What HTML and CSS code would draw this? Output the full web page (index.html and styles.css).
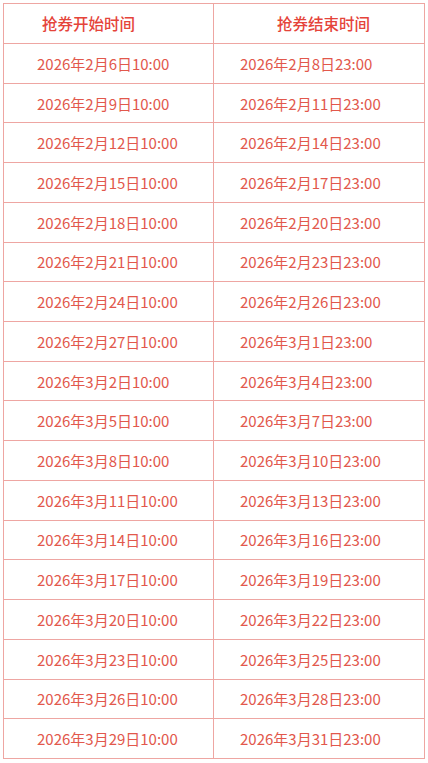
FILE: index.html
```html
<!DOCTYPE html>
<html lang="zh-CN">
<head>
<meta charset="utf-8">
<link rel="stylesheet" href="styles.css">
</head>
<body>
<div class="table">
  <div class="cell head c1">抢券开始时间</div><div class="cell head c2">抢券结束时间</div>
  <div class="cell c1">2026年2月6日10:00</div><div class="cell c2">2026年2月8日23:00</div>
  <div class="cell c1">2026年2月9日10:00</div><div class="cell c2">2026年2月11日23:00</div>
  <div class="cell c1">2026年2月12日10:00</div><div class="cell c2">2026年2月14日23:00</div>
  <div class="cell c1">2026年2月15日10:00</div><div class="cell c2">2026年2月17日23:00</div>
  <div class="cell c1">2026年2月18日10:00</div><div class="cell c2">2026年2月20日23:00</div>
  <div class="cell c1">2026年2月21日10:00</div><div class="cell c2">2026年2月23日23:00</div>
  <div class="cell c1">2026年2月24日10:00</div><div class="cell c2">2026年2月26日23:00</div>
  <div class="cell c1">2026年2月27日10:00</div><div class="cell c2">2026年3月1日23:00</div>
  <div class="cell c1">2026年3月2日10:00</div><div class="cell c2">2026年3月4日23:00</div>
  <div class="cell c1">2026年3月5日10:00</div><div class="cell c2">2026年3月7日23:00</div>
  <div class="cell c1">2026年3月8日10:00</div><div class="cell c2">2026年3月10日23:00</div>
  <div class="cell c1">2026年3月11日10:00</div><div class="cell c2">2026年3月13日23:00</div>
  <div class="cell c1">2026年3月14日10:00</div><div class="cell c2">2026年3月16日23:00</div>
  <div class="cell c1">2026年3月17日10:00</div><div class="cell c2">2026年3月19日23:00</div>
  <div class="cell c1">2026年3月20日10:00</div><div class="cell c2">2026年3月22日23:00</div>
  <div class="cell c1">2026年3月23日10:00</div><div class="cell c2">2026年3月25日23:00</div>
  <div class="cell c1">2026年3月26日10:00</div><div class="cell c2">2026年3月28日23:00</div>
  <div class="cell c1">2026年3月29日10:00</div><div class="cell c2">2026年3月31日23:00</div>
</div>
</body>
</html>
```
FILE: styles.css
```css
html, body {
  margin: 0;
  padding: 0;
  background: #ffffff;
}
body {
  font-family: "Noto Sans CJK SC", "Noto Sans", sans-serif;
  color: #e2584c;
}
.table {
  margin: 3px 0 0 3px;
  width: 422px;
  box-sizing: border-box;
  border-left: 1px solid #eea6a2;
  border-top: 1px solid #eea6a2;
  display: grid;
  grid-template-columns: 210px 211px;
  grid-template-rows: 40px repeat(18, 39.72px);
}
.cell {
  border-right: 1px solid #eea6a2;
  border-bottom: 1px solid #eea6a2;
  display: flex;
  align-items: center;
  font-size: 15px;
  line-height: 1;
  white-space: nowrap;
}
.cell.c1 {
  padding-left: 33px;
}
.cell.c2 {
  padding-left: 26px;
}
.head {
  font-size: 15.5px;
  font-weight: 500;
  color: #e5443a;
}
.head.c1 {
  padding-left: 38px;
}
.head.c2 {
  padding-left: 63px;
}
```
